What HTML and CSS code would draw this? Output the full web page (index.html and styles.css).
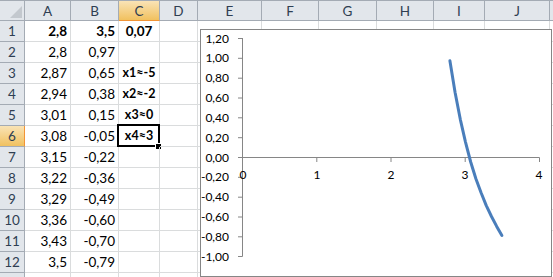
FILE: index.html
```html
<!DOCTYPE html>
<html lang="ru">
<head>
    <meta charset="UTF-8">
    <title>Лист1 - Excel</title>
    <link rel="stylesheet" href="styles.css">
</head>
<body>
    <div class="sheet">
        <!-- заголовки столбцов -->
        <div class="row head">
            <div class="corner"><span class="tri"></span></div>
            <div class="ch">A</div><div class="ch">B</div><div class="ch sel">C</div><div class="ch">D</div>
            <div class="ch">E</div><div class="ch">F</div><div class="ch">G</div><div class="ch">H</div>
            <div class="ch">I</div><div class="ch">J</div><div class="ch"></div>
        </div>

        <div class="row">
            <div class="rh">1</div>
            <div class="c num b">2,8</div><div class="c num b">3,5</div><div class="c mid b">0,07</div>
            <div class="c"></div><div class="c"></div><div class="c"></div><div class="c"></div><div class="c"></div><div class="c"></div><div class="c"></div><div class="c"></div>
        </div>
        <div class="row">
            <div class="rh">2</div>
            <div class="c num">2,8</div><div class="c num">0,97</div><div class="c"></div>
            <div class="c"></div><div class="c"></div><div class="c"></div><div class="c"></div><div class="c"></div><div class="c"></div><div class="c"></div><div class="c"></div>
        </div>
        <div class="row">
            <div class="rh">3</div>
            <div class="c num">2,87</div><div class="c num">0,65</div><div class="c mid root">x1≈-5</div>
            <div class="c"></div><div class="c"></div><div class="c"></div><div class="c"></div><div class="c"></div><div class="c"></div><div class="c"></div><div class="c"></div>
        </div>
        <div class="row">
            <div class="rh">4</div>
            <div class="c num">2,94</div><div class="c num">0,38</div><div class="c mid root">x2≈-2</div>
            <div class="c"></div><div class="c"></div><div class="c"></div><div class="c"></div><div class="c"></div><div class="c"></div><div class="c"></div><div class="c"></div>
        </div>
        <div class="row">
            <div class="rh">5</div>
            <div class="c num">3,01</div><div class="c num">0,15</div><div class="c mid root">x3≈0</div>
            <div class="c"></div><div class="c"></div><div class="c"></div><div class="c"></div><div class="c"></div><div class="c"></div><div class="c"></div><div class="c"></div>
        </div>
        <div class="row">
            <div class="rh sel">6</div>
            <div class="c num">3,08</div><div class="c num">-0,05</div><div class="c mid root active">x4≈3</div>
            <div class="c"></div><div class="c"></div><div class="c"></div><div class="c"></div><div class="c"></div><div class="c"></div><div class="c"></div><div class="c"></div>
        </div>
        <div class="row">
            <div class="rh">7</div>
            <div class="c num">3,15</div><div class="c num">-0,22</div><div class="c"></div>
            <div class="c"></div><div class="c"></div><div class="c"></div><div class="c"></div><div class="c"></div><div class="c"></div><div class="c"></div><div class="c"></div>
        </div>
        <div class="row">
            <div class="rh">8</div>
            <div class="c num">3,22</div><div class="c num">-0,36</div><div class="c"></div>
            <div class="c"></div><div class="c"></div><div class="c"></div><div class="c"></div><div class="c"></div><div class="c"></div><div class="c"></div><div class="c"></div>
        </div>
        <div class="row">
            <div class="rh">9</div>
            <div class="c num">3,29</div><div class="c num">-0,49</div><div class="c"></div>
            <div class="c"></div><div class="c"></div><div class="c"></div><div class="c"></div><div class="c"></div><div class="c"></div><div class="c"></div><div class="c"></div>
        </div>
        <div class="row">
            <div class="rh">10</div>
            <div class="c num">3,36</div><div class="c num">-0,60</div><div class="c"></div>
            <div class="c"></div><div class="c"></div><div class="c"></div><div class="c"></div><div class="c"></div><div class="c"></div><div class="c"></div><div class="c"></div>
        </div>
        <div class="row">
            <div class="rh">11</div>
            <div class="c num">3,43</div><div class="c num">-0,70</div><div class="c"></div>
            <div class="c"></div><div class="c"></div><div class="c"></div><div class="c"></div><div class="c"></div><div class="c"></div><div class="c"></div><div class="c"></div>
        </div>
        <div class="row">
            <div class="rh">12</div>
            <div class="c num">3,5</div><div class="c num">-0,79</div><div class="c"></div>
            <div class="c"></div><div class="c"></div><div class="c"></div><div class="c"></div><div class="c"></div><div class="c"></div><div class="c"></div><div class="c"></div>
        </div>
        <div class="row">
            <div class="rh"></div>
            <div class="c"></div><div class="c"></div><div class="c"></div>
            <div class="c"></div><div class="c"></div><div class="c"></div><div class="c"></div><div class="c"></div><div class="c"></div><div class="c"></div><div class="c"></div>
        </div>

        <!-- диаграмма поверх ячеек -->
        <div class="chart">
            <svg width="352" height="248" viewBox="0 0 352 248">
                <g class="axis">
                    <path d="M42.5 9V227.5M38 9.5H42.5M38 29.3H42.5M38 49.2H42.5M38 69H42.5M38 88.8H42.5M38 108.7H42.5M38 128.5H42.5M38 148.3H42.5M38 168.2H42.5M38 188H42.5M38 207.8H42.5M38 227.5H42.5"/>
                    <path d="M42.5 128.5H339.5M42.5 128.5V133M116.8 128.5V133M191 128.5V133M265.2 128.5V133M339.5 128.5V133"/>
                </g>
                <g class="ylab">
                    <text x="29" y="13.5">1,20</text>
                    <text x="29" y="33.3">1,00</text>
                    <text x="29" y="53.2">0,80</text>
                    <text x="29" y="73">0,60</text>
                    <text x="29" y="92.8">0,40</text>
                    <text x="29" y="112.7">0,20</text>
                    <text x="29" y="132.5">0,00</text>
                    <text x="29" y="152.3">-0,20</text>
                    <text x="29" y="172.2">-0,40</text>
                    <text x="29" y="192">-0,60</text>
                    <text x="29" y="211.8">-0,80</text>
                    <text x="29" y="231.5">-1,00</text>
                </g>
                <g class="xlab">
                    <text x="43" y="150">0</text>
                    <text x="117" y="150">1</text>
                    <text x="191" y="150">2</text>
                    <text x="265" y="150">3</text>
                    <text x="339" y="150">4</text>
                </g>
                <polyline class="series" points="249.9,31.8 255.1,63.5 260.3,90.3 265.5,113.1 270.7,133 275.9,149.8 281.1,163.7 286.3,176.6 291.5,187.5 296.7,197.4 301.9,206.4"/>
            </svg>
        </div>
    </div>
</body>
</html>
```

FILE: styles.css
```css
/* лист Excel 2010 */
:root {
    --grid: #dadcdd;
    --head-bg: #e2e6eb;
    --head-line: #a4abb4;
    --head-text: #2f3e52;
    --sel-bottom: #f1c15f;
    --sel-line: #f29436;
    --series: #4a7ebb;
}

html, body {
    margin: 0;
    height: 100%;
    overflow: hidden;
    background: #fff;
}

body {
    font-family: Lato, "Liberation Sans", sans-serif;
    font-size: 13.5px;
    color: #000;
}

.sheet {
    position: relative;
    border-top: 1px solid var(--head-line);
}

.row {
    display: grid;
    grid-template-columns: 25px 46px 48px 41px 38px 64px 57px 58px 57px 51px 65px 20px;
    height: 21px;
}
.row.head {
    height: 20px;
}

/* заголовки */
.corner, .ch, .rh {
    background: var(--head-bg);
    color: var(--head-text);
    border-right: 1px solid var(--head-line);
    border-bottom: 1px solid var(--head-line);
    display: flex;
    align-items: center;
    justify-content: center;
    font-size: 13.5px;
}
.corner {
    align-items: flex-end;
    justify-content: flex-end;
    padding: 0 2px 2px 0;
}
.tri {
    width: 0;
    height: 0;
    border-left: 12px solid transparent;
    border-bottom: 12px solid #c3c8ce;
}
.ch.sel {
    background: linear-gradient(#f9e3b6, var(--sel-bottom));
    border-bottom-color: var(--sel-line);
}
.rh.sel {
    background: linear-gradient(#f9e3b6, var(--sel-bottom));
    border-right-color: var(--sel-line);
}

/* ячейки */
.c {
    position: relative;
    border-right: 1px solid var(--grid);
    border-bottom: 1px solid var(--grid);
    display: flex;
    align-items: flex-end;
    padding: 0 3px 1px;
    line-height: 18px;
    white-space: nowrap;
}
.num { justify-content: flex-end; }
.mid { justify-content: center; padding: 0 0 1px; }
.b { font-weight: bold; }
.root { font-weight: bold; font-size: 12.5px; }

.active::before {
    content: "";
    position: absolute;
    inset: -2px -1px -1px -2px;
    border: 2px solid #000;
}
.active::after {
    content: "";
    position: absolute;
    right: -3px;
    bottom: -4px;
    width: 5px;
    height: 5px;
    background: #000;
    border: 1px solid #fff;
}

/* диаграмма */
.chart {
    position: absolute;
    left: 200px;
    top: 28px;
    width: 350px;
    height: 246px;
    background: #fff;
    border: 1px solid #868686;
}
.chart svg {
    display: block;
    margin: -1px 0 0 -1px;
}
.axis path {
    fill: none;
    stroke: #868686;
    stroke-width: 1;
}
.chart text {
    font-family: Lato, "Liberation Sans", sans-serif;
    font-size: 12px;
    fill: #000;
}
.ylab text { text-anchor: end; }
.xlab text { text-anchor: middle; }
.series {
    fill: none;
    stroke: var(--series);
    stroke-width: 3;
    stroke-linejoin: round;
    stroke-linecap: round;
}
```
